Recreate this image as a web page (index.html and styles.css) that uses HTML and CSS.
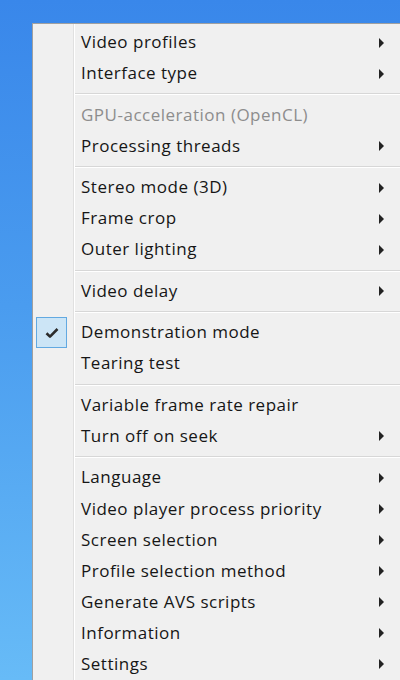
FILE: index.html
```html
<!DOCTYPE html>
<html>
<head>
<meta charset="utf-8">
<link rel="stylesheet" href="styles.css">
</head>
<body>
<div class="menu">
  <div class="item"><span class="gut"></span><span class="label">Video profiles</span><span class="arrow"></span></div>
  <div class="item"><span class="gut"></span><span class="label">Interface type</span><span class="arrow"></span></div>
  <div class="sep"></div>
  <div class="item disabled"><span class="gut"></span><span class="label">GPU-acceleration (OpenCL)</span></div>
  <div class="item"><span class="gut"></span><span class="label">Processing threads</span><span class="arrow"></span></div>
  <div class="sep"></div>
  <div class="item"><span class="gut"></span><span class="label">Stereo mode (3D)</span><span class="arrow"></span></div>
  <div class="item"><span class="gut"></span><span class="label">Frame crop</span><span class="arrow"></span></div>
  <div class="item"><span class="gut"></span><span class="label">Outer lighting</span><span class="arrow"></span></div>
  <div class="sep"></div>
  <div class="item"><span class="gut"></span><span class="label">Video delay</span><span class="arrow"></span></div>
  <div class="sep"></div>
  <div class="item"><span class="gut"><span class="check"><svg width="14" height="12" viewBox="0 0 14 12"><path d="M1.5 6.2 L5 9.6 L12.5 2" fill="none" stroke="#2b2b2b" stroke-width="2.6" stroke-linejoin="round"/></svg></span></span><span class="label">Demonstration mode</span></div>
  <div class="item"><span class="gut"></span><span class="label">Tearing test</span></div>
  <div class="sep"></div>
  <div class="item"><span class="gut"></span><span class="label">Variable frame rate repair</span></div>
  <div class="item"><span class="gut"></span><span class="label">Turn off on seek</span><span class="arrow"></span></div>
  <div class="sep"></div>
  <div class="item"><span class="gut"></span><span class="label">Language</span><span class="arrow"></span></div>
  <div class="item"><span class="gut"></span><span class="label">Video player process priority</span><span class="arrow"></span></div>
  <div class="item"><span class="gut"></span><span class="label">Screen selection</span><span class="arrow"></span></div>
  <div class="item"><span class="gut"></span><span class="label">Profile selection method</span><span class="arrow"></span></div>
  <div class="item"><span class="gut"></span><span class="label">Generate AVS scripts</span><span class="arrow"></span></div>
  <div class="item"><span class="gut"></span><span class="label">Information</span><span class="arrow"></span></div>
  <div class="item"><span class="gut"></span><span class="label">Settings</span><span class="arrow"></span></div>
</div>
</body>
</html>
```
FILE: styles.css
```css
html, body {
  margin: 0;
  height: 680px;
  overflow: hidden;
}
body {
  background: linear-gradient(to bottom, #3987ea 0%, #4a9cef 45%, #67bbf7 100%);
  padding: 23px 0 0 32px;
  box-sizing: border-box;
  font-family: "Open Sans", "Noto Sans", sans-serif;
  font-size: 17px;
  letter-spacing: 0.5px;
  color: #161616;
}
.menu {
  width: 368px;
  border-top: 1px solid #a0a0a0;
  border-left: 1px solid #a0a0a0;
  padding-top: 3px;
  background:
    linear-gradient(to right, transparent 40px, #e0e0e0 40px, #e0e0e0 41px, #ffffff 41px, #ffffff 42px, transparent 42px),
    #f0f0f0;
}
.item {
  display: flex;
  align-items: center;
  height: 31.1px;
  line-height: 20px;
}
.gut {
  flex: 0 0 48px;
  display: flex;
  align-items: center;
  height: 100%;
}
.label {
  flex: 1;
  white-space: nowrap;
  padding-bottom: 1px;
}
.disabled .label {
  color: #8d8d8d;
}
.arrow {
  flex: 0 0 auto;
  margin-right: 17px;
  width: 0;
  height: 0;
  border-left: 5px solid #222;
  border-top: 5px solid transparent;
  border-bottom: 5px solid transparent;
}
.check {
  margin-left: 3px;
  width: 29px;
  height: 29px;
  border: 1px solid #62a9e1;
  background: #cce5f6;
  display: flex;
  align-items: center;
  justify-content: center;
}
.sep {
  margin: 4.2px 0 4.2px 42px;
  height: 0;
  border-top: 1px solid #d7d7d7;
  border-bottom: 1px solid #ffffff;
}
```
